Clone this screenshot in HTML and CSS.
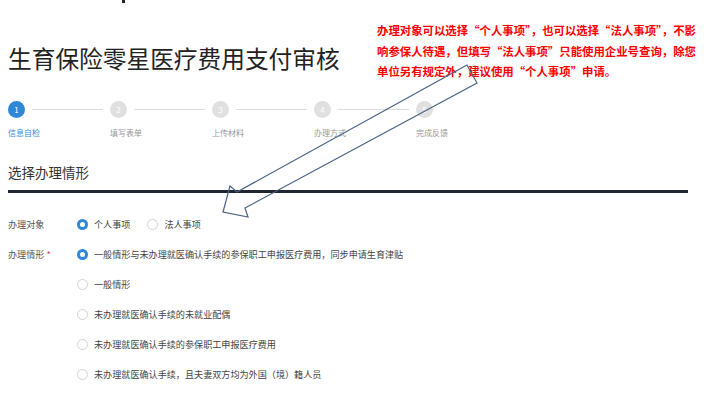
FILE: index.html
```html
<!DOCTYPE html>
<html lang="zh-CN">
<head>
<meta charset="utf-8">
<title>生育保险零星医疗费用支付审核</title>
<link rel="stylesheet" href="styles.css">
</head>
<body>
<div class="page">
  <h1 class="title">生育保险零星医疗费用支付审核</h1>
  <div class="steps">
    <div class="step active"><div class="node"><span class="dot">1</span><span class="bar"></span></div><div class="label">信息自检</div></div>
    <div class="step"><div class="node"><span class="dot">2</span><span class="bar"></span></div><div class="label">填写表单</div></div>
    <div class="step"><div class="node"><span class="dot">3</span><span class="bar"></span></div><div class="label">上传材料</div></div>
    <div class="step"><div class="node"><span class="dot">4</span><span class="bar"></span></div><div class="label">办理方式</div></div>
    <div class="step"><div class="node"><span class="dot">5</span></div><div class="label">完成反馈</div></div>
  </div>
  <h2 class="section">选择办理情形</h2>
  <div class="rule"></div>
  <div class="form">
    <div class="row">
      <div class="lbl">办理对象</div>
      <div class="inline">
        <span class="opt"><span class="radio on"></span>个人事项</span>
        <span class="opt"><span class="radio"></span>法人事项</span>
      </div>
    </div>
    <div class="row">
      <div class="lbl">办理情形<span class="req">*</span></div>
      <span class="opt"><span class="radio on"></span>一般情形与未办理就医确认手续的参保职工申报医疗费用，同步申请生育津贴</span>
    </div>
    <div class="row">
      <div class="lbl"></div>
      <span class="opt"><span class="radio"></span>一般情形</span>
    </div>
    <div class="row">
      <div class="lbl"></div>
      <span class="opt"><span class="radio"></span>未办理就医确认手续的未就业配偶</span>
    </div>
    <div class="row">
      <div class="lbl"></div>
      <span class="opt"><span class="radio"></span>未办理就医确认手续的参保职工申报医疗费用</span>
    </div>
    <div class="row">
      <div class="lbl"></div>
      <span class="opt"><span class="radio"></span>未办理就医确认手续，且夫妻双方均为外国（境）籍人员</span>
    </div>
  </div>
</div>
<div class="note">办理对象可以选择“个人事项”，也可以选择“法人事项”，不影<br>响参保人待遇，但填写“法人事项”只能使用企业号查询，除您<br>单位另有规定外，建议使用“个人事项”申请。</div>
<svg class="arrow" width="716" height="406" viewBox="0 0 716 406">
  <polygon points="467,65 237,192 230,186 223,212 248,217 245,208 477,83" fill="none" stroke="#4a6287" stroke-width="1.2" stroke-linejoin="miter"/>
</svg>
<span class="tick"></span>
</body>
</html>
```

FILE: styles.css
```css
* { box-sizing: border-box; }
html, body { margin: 0; padding: 0; background: #fff; }
body {
  width: 716px;
  height: 406px;
  overflow: hidden;
  position: relative;
  font-family: "Noto Sans CJK SC", "Noto Sans", sans-serif;
  color: #444;
}
.page { padding-left: 8px; }
.title {
  margin: 42px 0 0;
  font-size: 23.7px;
  line-height: 32px;
  font-weight: 400;
  color: #222;
  white-space: nowrap;
}
.steps {
  display: flex;
  margin-top: 27px;
}
.step { width: 102px; flex: none; }
.node { display: flex; align-items: center; height: 17px; }
.dot {
  width: 17px; height: 17px;
  border-radius: 50%;
  background: #e0e0e0;
  color: #fff;
  font-size: 8px;
  line-height: 17px;
  text-align: center;
  flex: none;
}
.bar {
  margin-left: 7px;
  width: 71px;
  height: 1px;
  background: #dcdcdc;
}
.label {
  margin-top: 9px;
  font-size: 8px;
  line-height: 12px;
  color: #999;
  white-space: nowrap;
}
.step.active .dot { background: #2f87d8; }
.step.active .label { color: #3a8ad6; }
.section {
  margin: 23px 0 0;
  font-size: 13.5px;
  line-height: 20px;
  font-weight: 400;
  color: #333;
}
.rule {
  margin-top: 8px;
  width: 680px;
  height: 3px;
  background: #1f2630;
}
.form { margin-top: 16px; }
.row {
  display: flex;
  align-items: center;
  height: 30px;
  font-size: 9.1px;
}
.lbl { width: 69px; flex: none; color: #555; white-space: nowrap; }
.req { color: #e23c3c; margin-left: 2px; }
.inline { display: flex; gap: 17px; }
.opt { display: flex; align-items: center; white-space: nowrap; color: #444; }
.radio {
  width: 11px; height: 11px;
  border-radius: 50%;
  border: 1px solid #d4d4d4;
  background: #fff;
  margin-right: 6px;
  flex: none;
}
.radio.on { border: 3.5px solid #2f87d8; }
.note {
  position: absolute;
  left: 377px;
  top: 20px;
  font-size: 11.4px;
  line-height: 20.5px;
  font-weight: 700;
  color: #f00;
  white-space: nowrap;
}
.arrow { position: absolute; left: 0; top: 0; pointer-events: none; }
.tick {
  position: absolute;
  left: 122px; top: 0;
  width: 3px; height: 3px;
  background: #222;
}
```
